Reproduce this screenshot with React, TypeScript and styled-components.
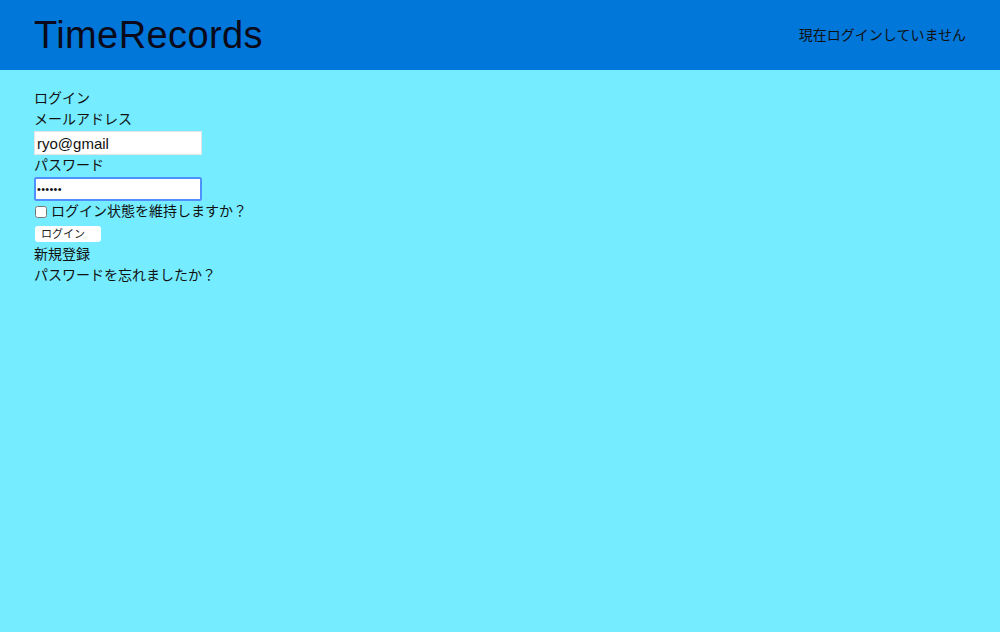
import styled, { createGlobalStyle } from 'styled-components';

const GlobalStyle = createGlobalStyle`
  html, body {
    margin: 0;
    padding: 0;
    background-color: #75ecff;
    font-family: "Liberation Sans", "Noto Sans CJK JP", sans-serif;
    color: #111;
  }
`;

const Page = styled.div`
  min-height: 632px;
  background-color: #75ecff;
`;

const Header = styled.header`
  display: flex;
  justify-content: space-between;
  align-items: center;
  height: 70px;
  padding: 0 34px 0 34px;
  background-color: #0077d9;
  box-sizing: border-box;
`;

const Title = styled.h1`
  margin: 0;
  font-size: 38px;
  font-weight: 400;
  letter-spacing: 0.4px;
  color: #0a0a1a;
`;

const Status = styled.span`
  margin-bottom: 3px;
  font-size: 14px;
  color: #111;
`;

const Main = styled.main`
  display: flex;
  flex-direction: column;
  align-items: flex-start;
  padding: 18px 34px;
`;

const Line = styled.div`
  font-size: 14px;
  line-height: 21px;
`;

const Input = styled.input<{ $focused?: boolean }>`
  width: 168px;
  height: 24px;
  margin: 1px 0 0 0;
  padding: 0 2px;
  box-sizing: border-box;
  border: 1px solid #e4e4e4;
  background: #fff;
  font-family: "Liberation Sans", sans-serif;
  font-size: ${(p) => (p.$focused ? '11px' : '15px')};
  letter-spacing: ${(p) => (p.$focused ? '0.3px' : '0')};
  color: #111;
  outline: ${(p) => (p.$focused ? '2px solid #4d90fe' : 'none')};
  outline-offset: -2px;
  border-radius: ${(p) => (p.$focused ? '2px' : '0')};
`;

const CheckRow = styled.label`
  display: flex;
  align-items: center;
  gap: 4px;
  font-size: 14px;
  line-height: 21px;
`;

const Check = styled.input`
  width: 12px;
  height: 12px;
  margin: 0 0 0 1px;
`;

const Button = styled.button`
  width: 66px;
  height: 16px;
  margin: 4px 0 2px 1px;
  padding: 0 0 0 6px;
  text-align: left;
  border: none;
  border-radius: 3px;
  background: #fff;
  font-family: "Liberation Sans", "Noto Sans CJK JP", sans-serif;
  font-size: 11px;
  line-height: 16px;
  color: #222;
`;

export default function App() {
  return (
    <Page>
      <GlobalStyle />
      <Header>
        <Title>TimeRecords</Title>
        <Status>現在ログインしていません</Status>
      </Header>
      <Main>
        <Line>ログイン</Line>
        <Line>メールアドレス</Line>
        <Input type="text" defaultValue="ryo@gmail" />
        <Line>パスワード</Line>
        <Input type="password" defaultValue="123456" $focused />
        <CheckRow>
          <Check type="checkbox" />
          ログイン状態を維持しますか？
        </CheckRow>
        <Button type="button">ログイン</Button>
        <Line>新規登録</Line>
        <Line>パスワードを忘れましたか？</Line>
      </Main>
    </Page>
  );
}
